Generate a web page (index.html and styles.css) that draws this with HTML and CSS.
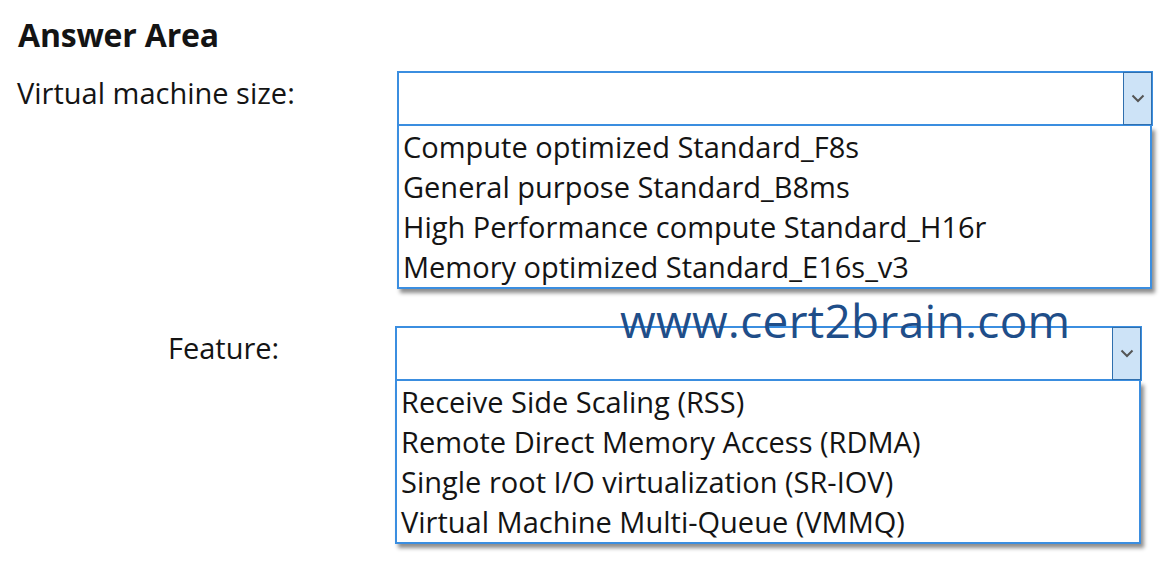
FILE: index.html
```html
<!DOCTYPE html>
<html>
<head>
<meta charset="utf-8">
<link rel="stylesheet" href="styles.css">
</head>
<body>
<div class="page">
  <h1 class="title">Answer Area</h1>
  <div class="question q1">
    <div class="label label-1">Virtual machine size:</div>
    <div class="dropdown dd-1">
      <div class="dd-head">
        <div class="dd-value"></div>
        <div class="dd-btn"><svg width="14" height="9" viewBox="0 0 14 9"><path d="M1.5 1.5 L7 7 L12.5 1.5" fill="none" stroke="#555" stroke-width="2"/></svg></div>
      </div>
      <ul class="dd-list">
        <li>Compute optimized Standard_F8s</li>
        <li>General purpose Standard_B8ms</li>
        <li>High Performance compute Standard_H16r</li>
        <li>Memory optimized Standard_E16s_v3</li>
      </ul>
    </div>
  </div>
  <div class="question q2">
    <div class="label label-2">Feature:</div>
    <div class="dropdown dd-2">
      <div class="dd-head">
        <div class="dd-value"></div>
        <div class="dd-btn"><svg width="14" height="9" viewBox="0 0 14 9"><path d="M1.5 1.5 L7 7 L12.5 1.5" fill="none" stroke="#555" stroke-width="2"/></svg></div>
      </div>
      <ul class="dd-list">
        <li>Receive Side Scaling (RSS)</li>
        <li>Remote Direct Memory Access (RDMA)</li>
        <li>Single root I/O virtualization (SR-IOV)</li>
        <li>Virtual Machine Multi-Queue (VMMQ)</li>
      </ul>
    </div>
  </div>
  <div class="watermark">www.cert2brain.com</div>
</div>
</body>
</html>
```

FILE: styles.css
```css
html, body {
  margin: 0;
  padding: 0;
  background: #ffffff;
}
.page {
  position: relative;
  width: 1165px;
  height: 564px;
  font-family: "Open Sans", "Noto Sans", sans-serif;
  color: #141414;
}
.title {
  margin: 0;
  padding: 15px 0 0 18px;
  height: 40px;
  font-size: 32px;
  font-weight: 700;
  line-height: 40px;
  letter-spacing: -0.2px;
}
.question {
  display: flex;
  align-items: flex-start;
}
.q1 {
  margin-top: 16px;
}
.q2 {
  margin-top: 37px;
}
.label {
  font-size: 29px;
  line-height: 40px;
  padding-top: 2px;
}
.label-1 {
  width: 380px;
  padding-left: 17px;
}
.label-2 {
  width: 227px;
  padding-left: 168px;
}
.dropdown {
  display: flex;
  flex-direction: column;
}
.dd-1 { width: 756px; }
.dd-2 { width: 747px; }
.dd-head {
  display: flex;
  height: 51px;
  border: 2px solid #3b8ee0;
  background: #fff;
}
.dd-value {
  flex: 1;
}
.dd-btn {
  width: 27px;
  margin: -1px -1px -1px 0;
  border: 1px solid #2f6fae;
  background: #cde3f7;
  display: flex;
  align-items: center;
  justify-content: center;
}
.dd-btn svg {
  display: block;
}
.dd-list {
  list-style: none;
  margin: 0 1px 0 0;
  padding: 1px 0 0 4px;
  border: 2px solid #3b8ee0;
  border-top: none;
  background: #fff;
  box-shadow: 3px 4px 4px rgba(0, 0, 0, 0.45);
}
.dd-list li {
  font-size: 29px;
  line-height: 40px;
  height: 40px;
  white-space: nowrap;
}
.watermark {
  position: absolute;
  left: 620px;
  top: 293px;
  font-size: 46px;
  line-height: 54px;
  color: #1f4e89;
  letter-spacing: 0.3px;
}
```
